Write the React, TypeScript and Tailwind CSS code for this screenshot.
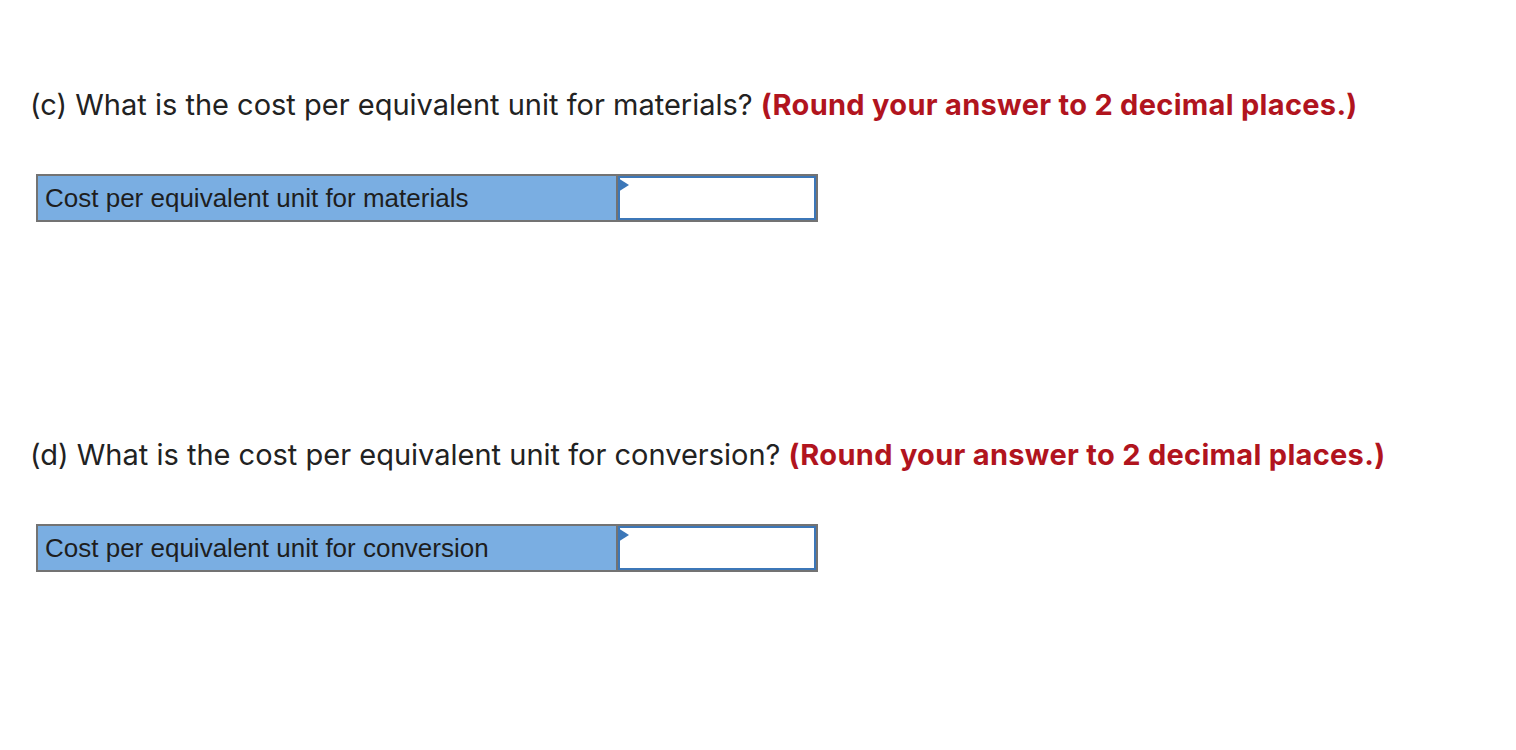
import React from 'react';

const Row: React.FC<{ label: string }> = ({ label }) => (
  <div className="flex w-[782px] h-[48px] border-2 border-[#737373]">
    <div className="w-[578px] bg-[#7aaee2] flex items-center pl-[7px] text-[26px] text-[#1e1e1e] font-['Liberation_Sans',Arial,sans-serif]">
      {label}
    </div>
    <div className="relative flex-1 border-l-2 border-[#737373]">
      <input className="w-full h-full bg-white border-2 border-[#3c77b8] outline-none px-2 text-[20px]" />
      <span className="absolute left-0 top-[2px] w-0 h-0 border-t-[7px] border-b-[7px] border-l-[11px] border-t-transparent border-b-transparent border-l-[#3c77b8]" />
    </div>
  </div>
);

const Question: React.FC<{ tag: string; text: string; label: string }> = ({ tag, text, label }) => (
  <div className="flex flex-col">
    <p className="text-[29px] leading-[36px] text-[#222] font-['Inter',sans-serif]">
      ({tag}) {text}{' '}
      <span className="font-bold tracking-[0.3px] text-[#b1141e]">(Round your answer to 2 decimal places.)</span>
    </p>
    <div className="mt-[51px] pl-[6px]">
      <Row label={label} />
    </div>
  </div>
);

export default function App() {
  return (
    <div className="w-[1516px] h-[750px] bg-white pl-[30px] pt-[87px]">
      <Question tag="c" text="What is the cost per equivalent unit for materials?" label="Cost per equivalent unit for materials" />
      <div className="h-[215px]" />
      <Question tag="d" text="What is the cost per equivalent unit for conversion?" label="Cost per equivalent unit for conversion" />
    </div>
  );
}
